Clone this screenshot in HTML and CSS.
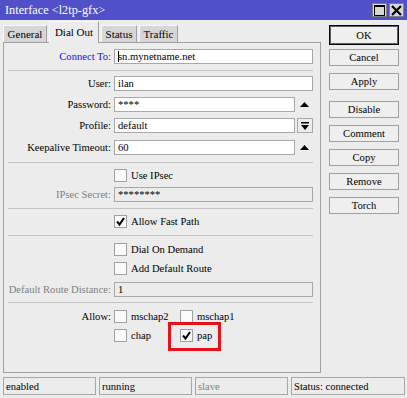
FILE: index.html
```html
<!DOCTYPE html>
<html>
<head>
<meta charset="utf-8">
<link rel="stylesheet" href="styles.css">
</head>
<body>
<div class="window">
  <div class="titlebar">
    <span class="title">Interface &lt;l2tp-gfx&gt;</span>
    <div class="tbtns">
      <span class="tbtn"><svg width="11" height="11" viewBox="0 0 11 11"><rect x="0.5" y="0.5" width="10" height="10" fill="none" stroke="#000"/><rect x="0" y="0" width="11" height="2" fill="#000"/></svg></span>
      <span class="tbtn"><svg width="11" height="11" viewBox="0 0 11 11"><path d="M1 1 L10 10 M10 1 L1 10" stroke="#000" stroke-width="2.2"/></svg></span>
    </div>
  </div>
  <div class="body">
    <div class="main">
      <div class="tabs">
        <span class="tab">General</span>
        <span class="tab active">Dial Out</span>
        <span class="tab">Status</span>
        <span class="tab">Traffic</span>
      </div>
      <div class="panel">
        <div class="row r-first">
          <label class="lbl blue">Connect To:</label>
          <div class="input"><span class="caret"></span>sn.mynetname.net</div>
        </div>
        <div class="sep s1"></div>
        <div class="row r-user">
          <label class="lbl">User:</label>
          <div class="input">ilan</div>
        </div>
        <div class="row r-pass">
          <label class="lbl">Password:</label>
          <div class="field">
            <div class="input">****</div>
            <span class="side"><svg width="9" height="5" viewBox="0 0 9 5"><path d="M0 5 L4.5 0 L9 5 Z" fill="#000"/></svg></span>
          </div>
        </div>
        <div class="row r-prof">
          <label class="lbl">Profile:</label>
          <div class="field">
            <div class="input">default</div>
            <span class="side dd"><svg width="8" height="8" viewBox="0 0 8 8"><rect x="0" y="0" width="8" height="1.5" fill="#000"/><path d="M0 3 L8 3 L4 8 Z" fill="#000"/></svg></span>
          </div>
        </div>
        <div class="row r-keep">
          <label class="lbl">Keepalive Timeout:</label>
          <div class="field">
            <div class="input">60</div>
            <span class="side"><svg width="9" height="5" viewBox="0 0 9 5"><path d="M0 5 L4.5 0 L9 5 Z" fill="#000"/></svg></span>
          </div>
        </div>
        <div class="sep s2"></div>
        <div class="row crow r-ipsec">
          <span class="lbl"></span>
          <div class="check"><span class="box"></span>Use IPsec</div>
        </div>
        <div class="row r-secret">
          <label class="lbl grey">IPsec Secret:</label>
          <div class="input disabled">********</div>
        </div>
        <div class="sep s3"></div>
        <div class="row crow r-fast">
          <span class="lbl"></span>
          <div class="check"><span class="box"><svg width="11" height="11" viewBox="0 0 11 11"><path d="M2 5.5 L4.5 8.5 L9 2" fill="none" stroke="#000" stroke-width="2"/></svg></span>Allow Fast Path</div>
        </div>
        <div class="sep s4"></div>
        <div class="row crow r-dial">
          <span class="lbl"></span>
          <div class="check"><span class="box"></span>Dial On Demand</div>
        </div>
        <div class="row crow r-adr">
          <span class="lbl"></span>
          <div class="check"><span class="box"></span>Add Default Route</div>
        </div>
        <div class="row r-drd">
          <label class="lbl grey">Default Route Distance:</label>
          <div class="input disabled">1</div>
        </div>
        <div class="sep s5"></div>
        <div class="row crow r-allow">
          <label class="lbl">Allow:</label>
          <div class="pair">
            <div class="check"><span class="box"></span>mschap2</div>
            <div class="check"><span class="box"></span>mschap1</div>
          </div>
        </div>
        <div class="row crow r-chap">
          <span class="lbl"></span>
          <div class="pair">
            <div class="check"><span class="box"></span>chap</div>
            <div class="check mark-wrap"><span class="box"><svg width="11" height="11" viewBox="0 0 11 11"><path d="M2 5.5 L4.5 8.5 L9 2" fill="none" stroke="#000" stroke-width="2"/></svg></span>pap<span class="highlight"></span></div>
          </div>
        </div>
      </div>
    </div>
    <div class="buttons">
      <span class="btn default">OK</span>
      <span class="btn">Cancel</span>
      <span class="btn">Apply</span>
      <span class="btn gap">Disable</span>
      <span class="btn">Comment</span>
      <span class="btn">Copy</span>
      <span class="btn">Remove</span>
      <span class="btn">Torch</span>
    </div>
  </div>
  <div class="statusbar">
    <span class="cell">enabled</span>
    <span class="cell">running</span>
    <span class="cell grey">slave</span>
    <span class="cell last">Status: connected</span>
  </div>
</div>
</body>
</html>
```

FILE: styles.css
```css
html, body {
  margin: 0;
  padding: 0;
  background: #ececec;
}
body, .window, .lbl, .input, .btn, .tab, .cell, .check, .title {
  font-family: "Liberation Serif", "DejaVu Serif", serif;
}
body {
  font-size: 10.6px;
  color: #000;
}
.window {
  width: 407px;
  height: 398px;
  overflow: hidden;
}
.titlebar {
  height: 20px;
  background: #5050c8;
  display: flex;
  align-items: center;
  justify-content: space-between;
}
.title {
  color: #fff;
  font-size: 12.3px;
  padding-left: 5px;
}
.tbtns {
  display: flex;
  gap: 2px;
  padding-right: 3px;
}
.tbtn {
  width: 15px;
  height: 14px;
  background: #d8d8d8;
  border: 1px solid #808080;
  box-sizing: border-box;
  display: flex;
  align-items: center;
  justify-content: center;
}
.body {
  display: flex;
}
.main {
  margin-left: 3px;
  width: 318px;
}
.tabs {
  height: 22px;
  display: flex;
  align-items: flex-end;
  gap: 2px;
}
.tab {
  height: 17px;
  box-sizing: border-box;
  background: #d6d6d6;
  border-top: 1px solid #f8f8f8;
  border-left: 1px solid #f8f8f8;
  border-right: 1px solid #a0a0a0;
  display: flex;
  align-items: center;
  justify-content: center;
  white-space: nowrap;
  font-size: 11px;
}
.tab:first-child { width: 44px; }
.tab.active {
  height: 22px;
  width: 50px;
  background: #ececec;
  margin-bottom: -1px;
  position: relative;
  z-index: 1;
  padding-bottom: 2px;
}
.tab:nth-child(3) { width: 36px; }
.tab:nth-child(4) { width: 39px; }
.panel {
  height: 331px;
  box-sizing: border-box;
  border: 1px solid #a0a0a0;
  padding: 6px 7px 0 0;
}
.row {
  display: grid;
  grid-template-columns: 107px 1fr;
  column-gap: 3px;
  align-items: center;
  height: 15px;
}
.crow { height: 13px; }
.lbl {
  text-align: right;
  white-space: nowrap;
}
.blue { color: #1010f0; }
.grey { color: #808080; }
.input {
  height: 15px;
  box-sizing: border-box;
  border: 1px solid #a8a8a8;
  background: #fff;
  padding-left: 3px;
  line-height: 13px;
  white-space: nowrap;
  position: relative;
}
.input.disabled { background: #ececec; }
.caret {
  display: inline-block;
  width: 1px;
  height: 11px;
  background: #000;
  vertical-align: -2px;
  margin-right: -1px;
}
.field {
  display: flex;
}
.field .input { flex: 1; }
.side {
  width: 18px;
  display: flex;
  align-items: center;
  justify-content: center;
}
.side.dd {
  width: 16px;
  margin-left: 2px;
  height: 15px;
  box-sizing: border-box;
  border: 1px solid #a8a8a8;
}
.sep {
  height: 1px;
  background: #c4c4c4;
  margin-left: 4px;
}
.s1 { margin-top: 6px; }
.r-user { margin-top: 5px; }
.r-pass { margin-top: 6px; }
.r-prof { margin-top: 6px; }
.r-keep { margin-top: 7px; }
.s2 { margin-top: 7px; }
.r-ipsec { margin-top: 6px; }
.r-secret { margin-top: 5px; }
.s3 { margin-top: 6px; }
.r-fast { margin-top: 6px; }
.s4 { margin-top: 7px; }
.r-dial { margin-top: 7px; }
.r-adr { margin-top: 6px; }
.r-drd { margin-top: 7px; }
.s5 { margin-top: 5px; }
.r-allow { margin-top: 7px; }
.r-chap { margin-top: 6px; }
.check {
  display: flex;
  align-items: center;
  gap: 4px;
  white-space: nowrap;
}
.box {
  width: 13px;
  height: 13px;
  box-sizing: border-box;
  border: 1px solid #a0a0a0;
  background: #fafafa;
  display: flex;
  align-items: center;
  justify-content: center;
  flex: none;
}
.pair {
  display: grid;
  grid-template-columns: 66px 1fr;
}
.mark-wrap { position: relative; }
.highlight {
  position: absolute;
  left: -12px;
  top: -7px;
  width: 53px;
  height: 29px;
  box-sizing: border-box;
  border: 3px solid #e8101a;
}
.buttons {
  margin-left: 8px;
  width: 70px;
  padding-top: 5px;
  display: flex;
  flex-direction: column;
  gap: 7px;
}
.btn {
  height: 17px;
  box-sizing: border-box;
  border: 1px solid #a0a0a0;
  background: #efefef;
  display: flex;
  align-items: center;
  justify-content: center;
}
.btn.default {
  height: 20px;
  border: 1px solid #000;
  box-shadow: inset 0 0 0 1px #606060;
  margin-bottom: -3px;
}
.btn.gap { margin-top: 4px; }
.statusbar {
  margin-top: 4px;
  display: flex;
  gap: 3px;
  padding-left: 3px;
  padding-right: 2px;
}
.cell {
  width: 93px;
  height: 18px;
  box-sizing: border-box;
  border: 1px solid #a8a8a8;
  padding-left: 2px;
  display: flex;
  align-items: center;
  white-space: nowrap;
}
.cell.last { flex: 1; }
```
